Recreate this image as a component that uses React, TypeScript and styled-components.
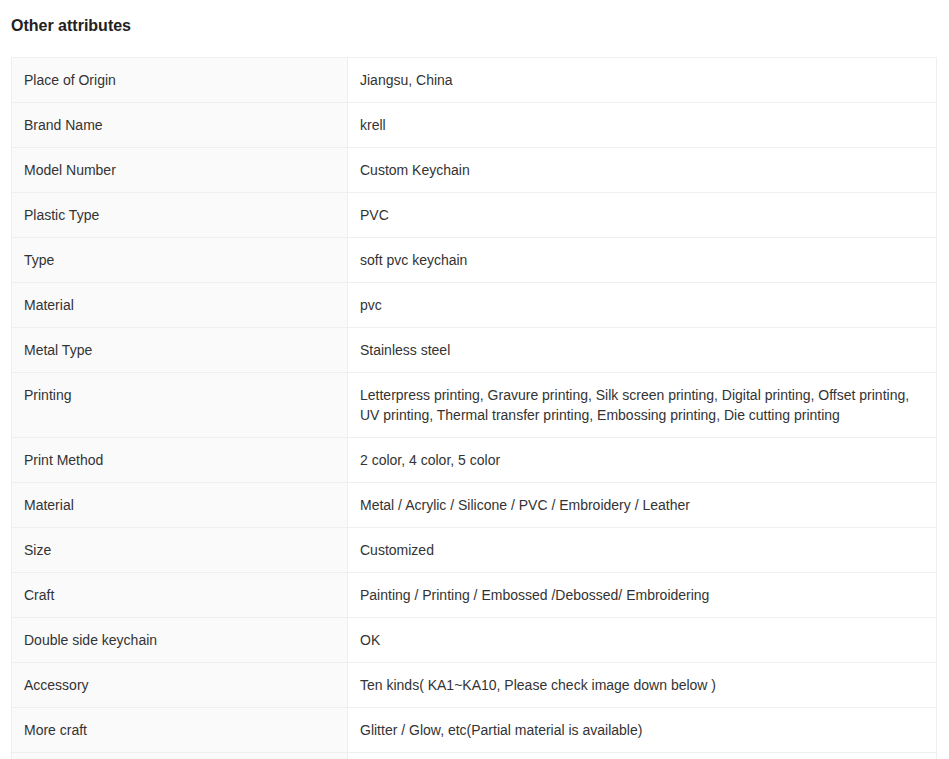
import React from "react";
import styled, { createGlobalStyle } from "styled-components";

const Global = createGlobalStyle`
  html, body { margin: 0; padding: 0; background: #fff; }
  body { font-family: "Liberation Sans", Arial, sans-serif; color: #333; }
`;

const Page = styled.div`
  padding: 14px 12px 0 11px;
`;

const Title = styled.h3`
  margin: 0 0 19px;
  font-size: 16px;
  line-height: 24px;
  font-weight: 700;
  color: #222;
`;

const Table = styled.div`
  width: 926px;
  border: 1px solid #efefef;
  border-bottom: none;
  box-sizing: border-box;
`;

const Row = styled.div`
  display: grid;
  grid-template-columns: 336px 1fr;
  border-bottom: 1px solid #efefef;
`;

const Cell = styled.div<{ $label?: boolean }>`
  box-sizing: border-box;
  min-height: 44px;
  padding: 12px;
  font-size: 14px;
  line-height: 20px;
  color: #333;
  background: ${(p) => (p.$label ? "#fafafa" : "#fff")};
  border-right: ${(p) => (p.$label ? "1px solid #efefef" : "none")};
`;

const rows: [string, string][] = [
  ["Place of Origin", "Jiangsu, China"],
  ["Brand Name", "krell"],
  ["Model Number", "Custom Keychain"],
  ["Plastic Type", "PVC"],
  ["Type", "soft pvc keychain"],
  ["Material", "pvc"],
  ["Metal Type", "Stainless steel"],
  [
    "Printing",
    "Letterpress printing, Gravure printing, Silk screen printing, Digital printing, Offset printing, UV printing, Thermal transfer printing, Embossing printing, Die cutting printing",
  ],
  ["Print Method", "2 color, 4 color, 5 color"],
  ["Material", "Metal / Acrylic / Silicone / PVC / Embroidery / Leather"],
  ["Size", "Customized"],
  ["Craft", "Painting / Printing / Embossed /Debossed/ Embroidering"],
  ["Double side keychain", "OK"],
  ["Accessory", "Ten kinds( KA1~KA10, Please check image down below )"],
  ["More craft", "Glitter / Glow, etc(Partial material is available)"],
  ["", ""],
];

export default function App() {
  return (
    <Page>
      <Global />
      <Title>Other attributes</Title>
      <Table>
        {rows.map(([k, v], i) => (
          <Row key={i}>
            <Cell $label>{k}</Cell>
            <Cell>{v}</Cell>
          </Row>
        ))}
      </Table>
    </Page>
  );
}
